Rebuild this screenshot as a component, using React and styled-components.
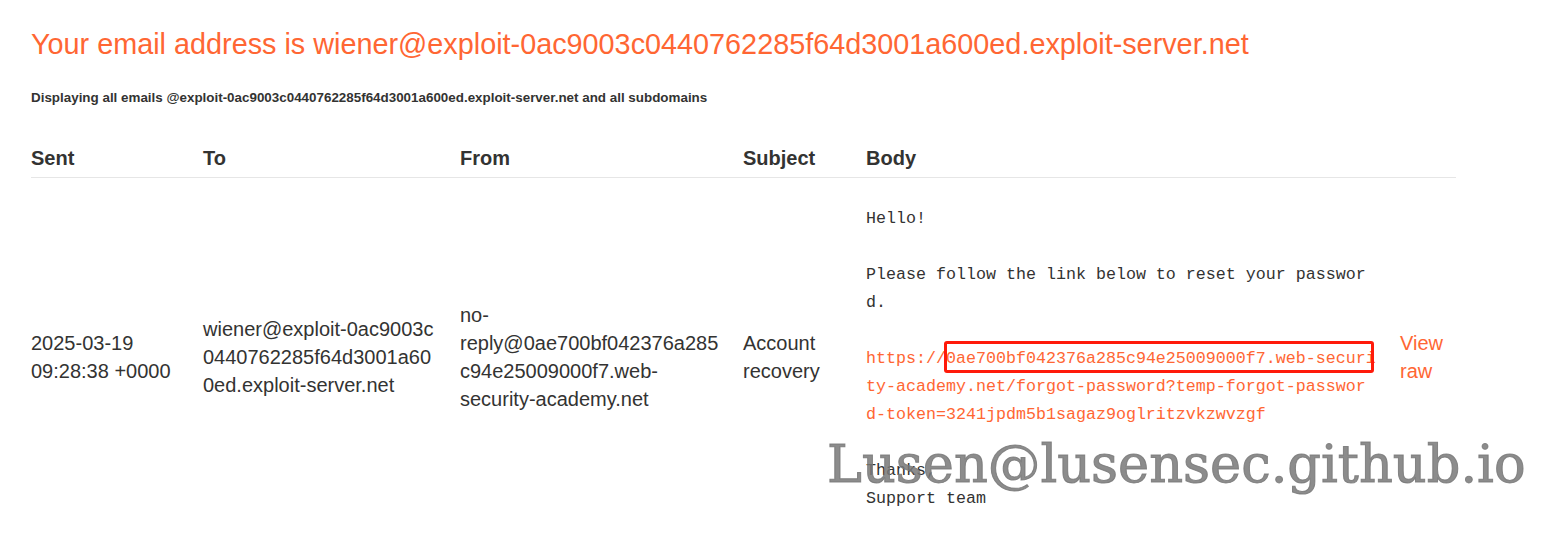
import React from "react";
import styled, { createGlobalStyle } from "styled-components";

const GlobalStyle = createGlobalStyle`
  html, body {
    margin: 0;
    padding: 0;
    background: #ffffff;
  }
  body {
    font-family: "Liberation Sans", Arial, sans-serif;
    color: #333332;
  }
`;

const email = {
  sent: ["2025-03-19", "09:28:38 +0000"],
  to: ["wiener@exploit-0ac9003c", "0440762285f64d3001a60", "0ed.exploit-server.net"],
  from: ["no-", "reply@0ae700bf042376a285", "c94e25009000f7.web-", "security-academy.net"],
  subject: ["Account", "recovery"],
};

const App = () => {
  return (
    <Page>
      <GlobalStyle />
      <Title>
        Your email address is wiener@exploit-0ac9003c0440762285f64d3001a600ed.exploit-server.net
      </Title>
      <Subtitle>
        Displaying all emails @exploit-0ac9003c0440762285f64d3001a600ed.exploit-server.net and all subdomains
      </Subtitle>

      <Table>
        <HeaderRow>
          <HeadCell>Sent</HeadCell>
          <HeadCell>To</HeadCell>
          <HeadCell>From</HeadCell>
          <HeadCell>Subject</HeadCell>
          <HeadCell>Body</HeadCell>
          <HeadCell />
        </HeaderRow>

        <Row>
          <Cell>{email.sent.map((l) => <Line key={l}>{l}</Line>)}</Cell>
          <Cell>{email.to.map((l) => <Line key={l}>{l}</Line>)}</Cell>
          <Cell>{email.from.map((l) => <Line key={l}>{l}</Line>)}</Cell>
          <Cell>{email.subject.map((l) => <Line key={l}>{l}</Line>)}</Cell>
          <BodyCell>
            <Pre>
              {"Hello!\n\nPlease follow the link below to reset your passwor\nd.\n\n"}
              <Link>
                {"https://"}
                <Marked>0ae700bf042376a285c94e25009000f7.web-securi</Marked>
                {"\nty-academy.net/forgot-password?temp-forgot-passwor\nd-token=3241jpdm5b1sagaz9oglritzvkzwvzgf"}
              </Link>
              {"\n\nThanks,\nSupport team"}
            </Pre>
            <Watermark>Lusen@lusensec.github.io</Watermark>
          </BodyCell>
          <Cell>
            <RawLink>View</RawLink>
            <RawLink>raw</RawLink>
          </Cell>
        </Row>
      </Table>
    </Page>
  );
};

export default App;

const Page = styled.div`
  padding: 28px 0 0 31px;
  height: 536px;
  box-sizing: border-box;
  overflow: hidden;
`;

const Title = styled.h1`
  margin: 0;
  font-size: 28.8px;
  line-height: 32px;
  font-weight: 400;
  color: #ff6633;
  white-space: nowrap;
`;

const Subtitle = styled.h4`
  margin: 30px 0 0;
  font-size: 13.4px;
  line-height: 16px;
  font-weight: 700;
  color: #333332;
  white-space: nowrap;
`;

const Table = styled.div`
  margin-top: 38px;
  width: 1425px;
`;

const HeaderRow = styled.div`
  display: grid;
  grid-template-columns: 172px 257px 283px 123px 534px 56px;
  border-bottom: 1px solid #e6e6e6;
  padding-bottom: 5px;
`;

const HeadCell = styled.div`
  font-size: 20px;
  line-height: 28px;
  font-weight: 700;
  color: #333332;
`;

const Row = styled.div`
  display: grid;
  grid-template-columns: 172px 257px 283px 123px 534px 56px;
  align-items: center;
`;

const Cell = styled.div`
  display: flex;
  flex-direction: column;
  font-size: 20px;
  line-height: 28px;
  color: #333332;
`;

const Line = styled.span`
  white-space: nowrap;
`;

const BodyCell = styled.div`
  position: relative;
  padding: 27px 0 22px;
`;

const Pre = styled.pre`
  margin: 0;
  font-family: "Liberation Mono", "Courier New", monospace;
  font-size: 16.66px;
  line-height: 28px;
  color: #333332;
  white-space: pre;
`;

const Link = styled.span`
  color: #ff6633;
`;

const Marked = styled.span`
  position: relative;

  &::after {
    content: "";
    position: absolute;
    left: -2px;
    right: 2px;
    top: -8px;
    bottom: -5px;
    border: 3px solid #ff1a0a;
    border-radius: 3px;
  }
`;

const RawLink = styled.span`
  color: #ff6633;
  white-space: nowrap;
`;

const Watermark = styled.div`
  position: absolute;
  left: -39px;
  top: 256px;
  font-family: "DejaVu Serif", "Liberation Serif", serif;
  font-size: 52.6px;
  line-height: 60px;
  color: rgba(120, 120, 120, 0.85);
  -webkit-text-stroke: 1px rgba(120, 120, 120, 0.85);
  white-space: nowrap;
  pointer-events: none;
`;
